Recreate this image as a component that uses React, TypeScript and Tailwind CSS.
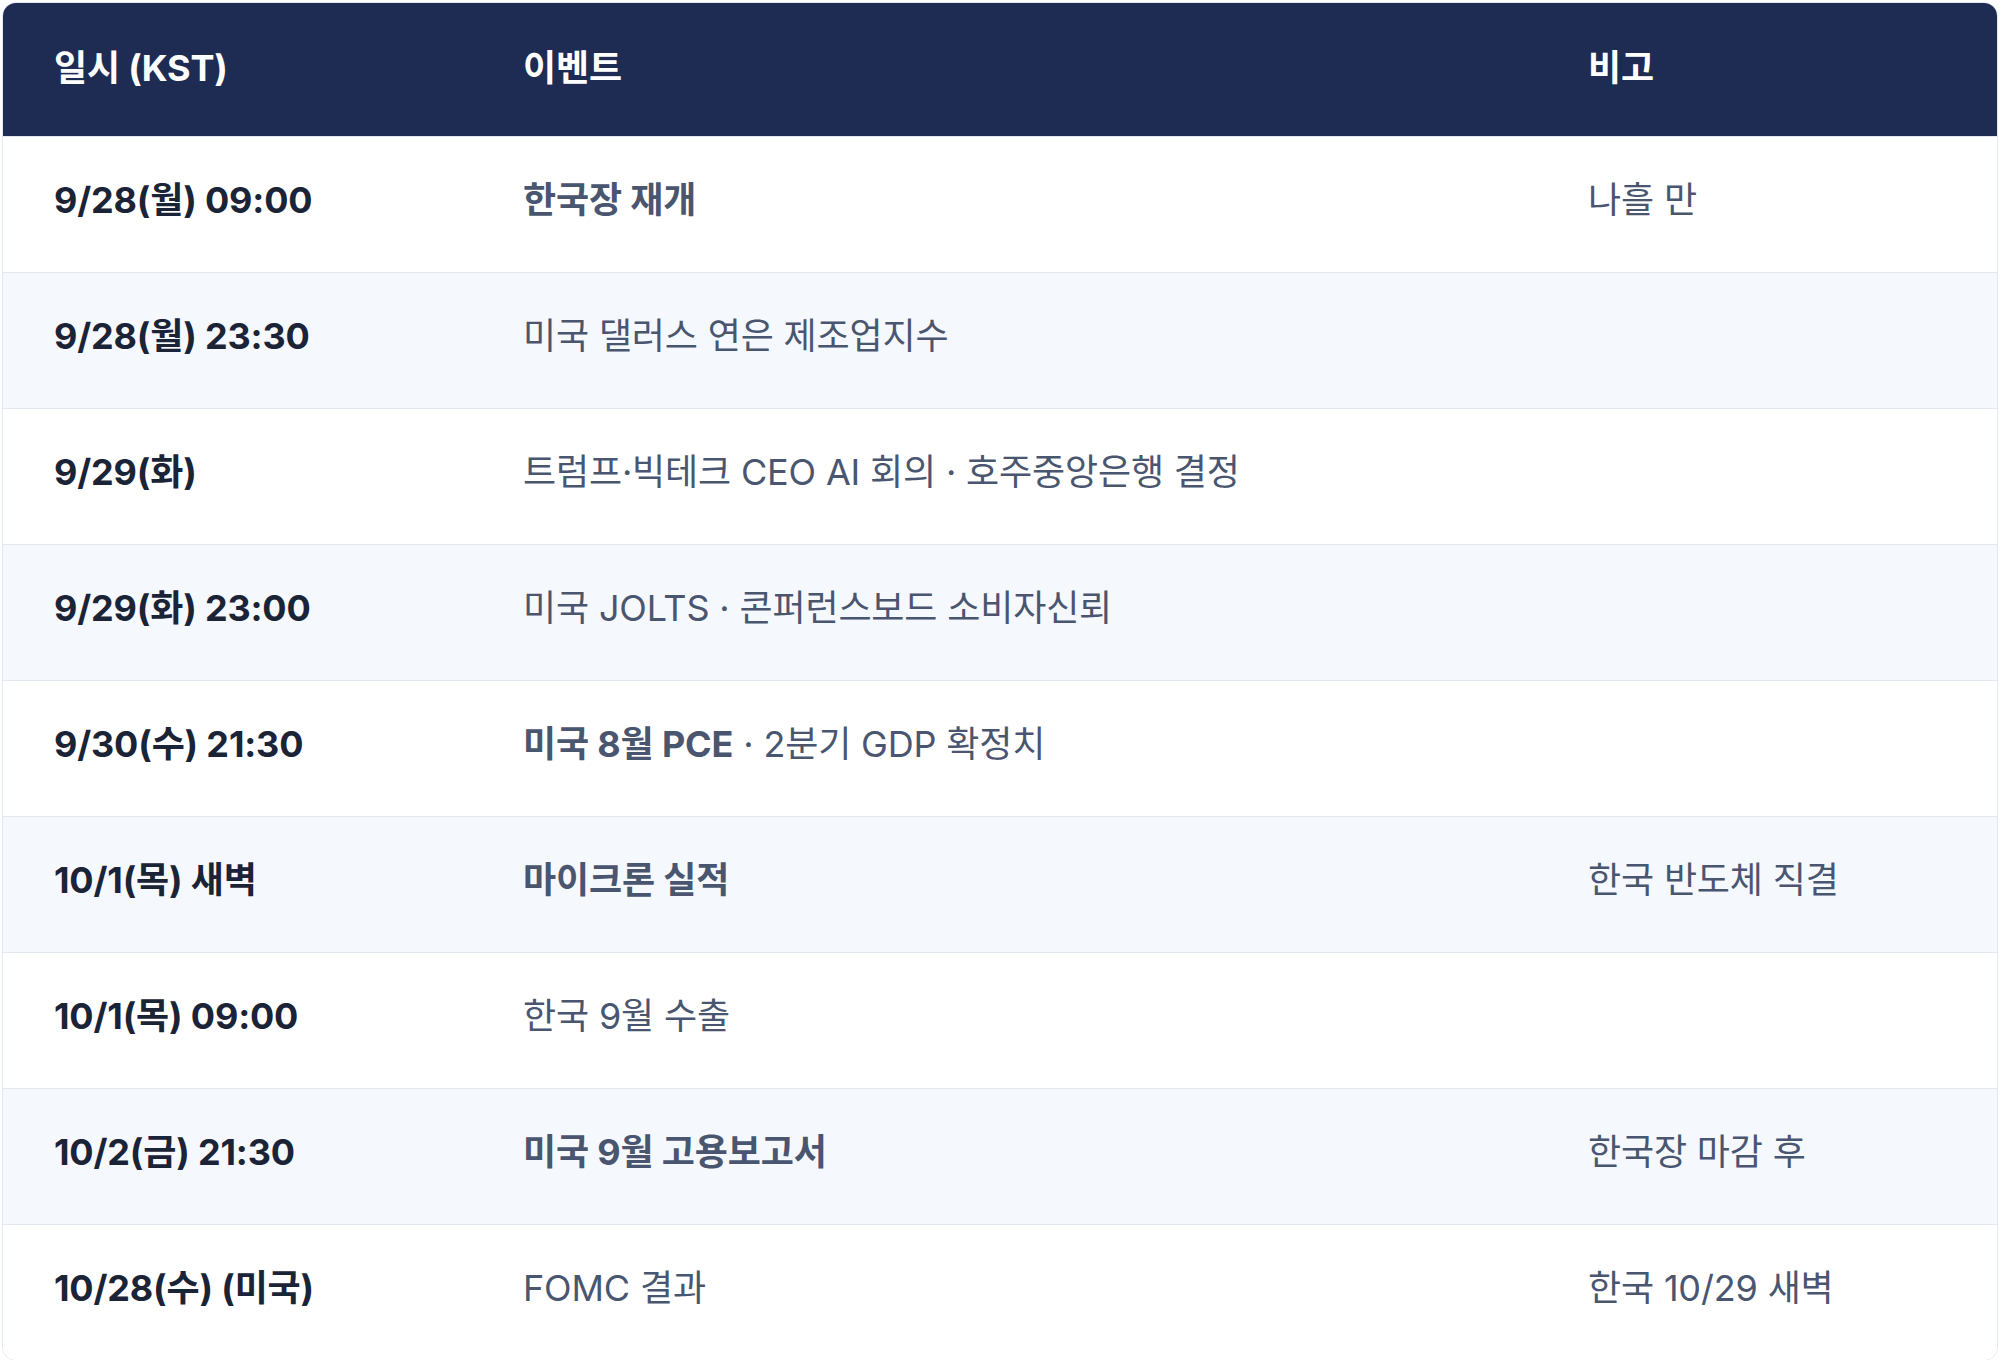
import type { ReactNode } from "react";

type Row = {
  date: string;
  event: ReactNode;
  note?: string;
};

const rows: Row[] = [
  { date: "9/28(월) 09:00", event: <b className="font-bold">한국장 재개</b>, note: "나흘 만" },
  { date: "9/28(월) 23:30", event: "미국 댈러스 연은 제조업지수" },
  { date: "9/29(화)", event: "트럼프·빅테크 CEO AI 회의 · 호주중앙은행 결정" },
  { date: "9/29(화) 23:00", event: "미국 JOLTS · 콘퍼런스보드 소비자신뢰" },
  {
    date: "9/30(수) 21:30",
    event: (
      <>
        <b className="font-bold">미국 8월 PCE</b> · 2분기 GDP 확정치
      </>
    ),
  },
  { date: "10/1(목) 새벽", event: <b className="font-bold">마이크론 실적</b>, note: "한국 반도체 직결" },
  { date: "10/1(목) 09:00", event: "한국 9월 수출" },
  { date: "10/2(금) 21:30", event: <b className="font-bold">미국 9월 고용보고서</b>, note: "한국장 마감 후" },
  { date: "10/28(수) (미국)", event: "FOMC 결과", note: "한국 10/29 새벽" },
];

const grid = "grid grid-cols-[468px_1065px_1fr] items-center";

export default function App() {
  return (
    <div className="min-h-screen bg-white p-[2px] font-['Inter','Noto_Sans_CJK_KR',sans-serif] tracking-[-0.01em]">
      <div className="overflow-hidden rounded-[14px] border border-[#e2e8f0] bg-white">
        <div className={`${grid} h-[133px] bg-[#1e2c53] pb-[4px] text-[36px] font-bold leading-[48px] text-white`}>
          <div className="pl-[51px]">일시 (KST)</div>
          <div className="pl-[52px]">이벤트</div>
          <div className="pl-[52px]">비고</div>
        </div>
        {rows.map((row, i) => (
          <div
            key={row.date}
            className={`${grid} h-[136px] border-t border-[#e2e8f0] pb-[10px] text-[36px] leading-[48px] ${i % 2 === 1 ? "bg-[#f5f8fc]" : "bg-white"}`}
          >
            <div className="pl-[51px] font-bold text-[#1b2336]">{row.date}</div>
            <div className="pl-[52px] text-[#4a5670]">{row.event}</div>
            <div className="pl-[52px] text-[#4a5670]">{row.note}</div>
          </div>
        ))}
      </div>
    </div>
  );
}
